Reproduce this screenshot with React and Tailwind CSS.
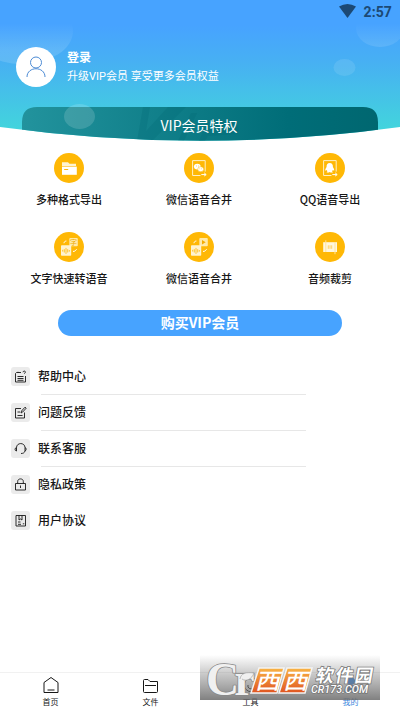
import React from "react";

const features = [
  ["多种格式导出", "folder"],
  ["微信语音合并", "wechat"],
  ["QQ语音导出", "qq"],
  ["文字快速转语音", "text"],
  ["微信语音合并", "play"],
  ["音频裁剪", "cut"],
];

function FeatureIcon({ kind }) {
  return (
    <svg className="block h-[30px] w-[30px]" viewBox="0 0 30 30" fill="none">
      <circle cx="15" cy="15" r="15" fill="#ffb805" />
      {kind === "folder" && (
        <>
          <path d="M8 13V9.2h6l1.5 1.5H22V13z" fill="#fff3d0" />
          <path d="M8 13.6h14.8v8.2H8z" fill="#fff" />
          <path d="M10.2 16.5h4" stroke="#ffb805" />
        </>
      )}
      {(kind === "wechat" || kind === "qq") && (
        <>
          <path d="M16.500 22.500H8.600V7.600h12.600v11" stroke="#fff0c4" strokeWidth="1" />
          <path d="M17.300 21.600h4.500m-1.600-1.700 2 1.700-2 1.400" stroke="#fff" strokeWidth="1" />
        </>
      )}
      {kind === "wechat" && (
        <>
          <ellipse cx="13.3" cy="13.6" rx="3.4" ry="2.9" fill="#fff" />
          <ellipse cx="16.7" cy="16.2" rx="3" ry="2.5" fill="#fff" stroke="#ffb805" strokeWidth=".5" />
          <path d="M12 13h.7m1.6 0h.7m.6 2.8h.5m1.4 0h.5" stroke="#ffb805" strokeWidth=".8" />
        </>
      )}
      {kind === "qq" && (
        <path d="M14.7 10c-2.4 0-3.3 1.800-3.100 4-.8 1.300-1.700 2.800-1.200 3.700l1.300-.7.7 1.400-.9 1.200h2.400l.8-.5.9.5H18l-.9-1.200.7-1.400 1.300.7c.5-.9-.4-2.400-1.200-3.700.2-2.200-.8-4-3.200-4z" fill="#fff" />
      )}
      {(kind === "text" || kind === "play") && (
        <>
          <rect x="15.3" y="6" width="8.5" height="8.3" rx="1" fill="#ffe9a8" />
          <rect x="7" y="13.3" width="10.2" height="10.5" rx=".8" fill="#fff3d0" />
          <path d="M8.7 17.8v1.8m1.6-2.4v3.3m1.7-4.6v6m1.7-4.7v3.3m1.6-2.5v1.7" stroke="#ffb805" strokeWidth=".8" />
          <path d="M10 11.2c.2-1.5 1-2.1 2.4-2.2M19 19.4c1.7.1 2.6-.6 3.600-2.200" stroke="#fff" />
        </>
      )}
      {kind === "text" && (
        <text x="16.1" y="13" fontSize="7" fill="#f0ab00">字</text>
      )}
      {kind === "play" && <path d="M18 8v4.500l3.700-2.200z" fill="#f5ac00" />}
      {kind === "cut" && (
        <>
          <rect x="8.2" y="10.2" width="13.8" height="9.8" fill="#fff7df" />
          <path d="M10.800 8.300v11.700M20 10v12.200" stroke="#ffe49c" />
          <path d="M13.300 13.300v3.500m1.700-3.500v3.500m1.700-3.500v3.500" stroke="#ffc94a" strokeWidth=".8" />
        </>
      )}
    </svg>
  );
}

const rows = [
  ["帮助中心", "M10 5.5H5.5l-1 1v8.5h10V9M7 5.5V4.8M6.5 9.5h6M6.5 11.5h6M6.5 13.3h6M12 5.2c0-1.5 2.6-1.5 2.4 0 0 .8-1 .8-1 1.5"],
  ["问题反馈", "M10 5.5H4.5V15h9V9.5M6.5 9H9M6.5 12.5h5M10 10l.5-2L14 4.2l1.2 1L11.7 9z"],
  ["联系客服", "M5.5 12V8.7C5.5 3.2 14 3.2 14 8.7V12M5.5 8.5C3.6 8.7 3.6 12 5.5 12M14 8.5c1.5.2 1.5 3 0 3.5-.4 1.8-2 2.5-4 2.5"],
  ["隐私政策", "M4.5 8.5h10V15h-10zM6.7 8.5V6.3c0-3.2 5.6-3.2 5.6 0v2.2M9.5 10.5v2.5"],
  ["用户协议", "M5 4.5h9.5V15H5zM8 4.5V9l1.5-1L11 9V4.5M7 11h2.5M7 13.3h3M11.8 12.8h1.5"],
];

function Nav({ label, active, children }) {
  return (
    <div className={"flex flex-1 flex-col items-center pt-[3px] pl-[1px] " + (active ? "text-[#3b87dd]" : "text-[#171717]")}>
      <svg className="h-[18px] w-[18px]" viewBox="0 0 18 18" fill="none" stroke="currentColor" strokeWidth="1">
        {children}
      </svg>
      <span className="mt-[2px] text-[8px] leading-[12px]">{label}</span>
    </div>
  );
}

function Watermark() {
  return (
    <svg className="absolute top-[655px] left-[200px] h-[45px] w-[180px] overflow-visible" viewBox="0 0 180 45">
      <defs>
        <linearGradient id="shade" x2="0" y2="1">
          <stop stopColor="#777" stopOpacity="0" />
          <stop offset=".45" stopColor="#777" stopOpacity=".42" />
          <stop offset="1" stopColor="#6c6c6c" stopOpacity=".86" />
        </linearGradient>
        <linearGradient id="orange" x2="0" y2="1">
          <stop stopColor="#f9b545" />
          <stop offset="1" stopColor="#df5421" />
        </linearGradient>
      </defs>
      <path fill="url(#shade)" d="M0 0h180v45H0z" />
      <text x="6" y="40" dx="0 -5" className="font-['Liberation_Serif',serif] font-bold" fontSize="46" fill="#f0f0f0" stroke="#888" strokeWidth="1.6" strokeLinejoin="round" paintOrder="stroke">Cr</text>
      <path d="M40 24c1-6 6-7 14-6-2 6-8 9-12 6" fill="#f0f0f0" stroke="#999" strokeWidth=".6" />
      <path d="M59 13h25l-7 25H51zM87 13h25l-7 25H79z" fill="url(#orange)" stroke="#f4f4f4" strokeWidth="1.5" />
      <g className="font-['Noto_Sans_CJK_SC',sans-serif]" fill="#fff">
        <text transform="translate(55 33.5) skewX(-14) scale(1.12 1)" fontSize="22" fontWeight="500">西</text>
        <text transform="translate(83 33.5) skewX(-14) scale(1.12 1)" fontSize="22" fontWeight="500">西</text>
        <text transform="translate(115 27) skewX(-10)" fontSize="18" fontWeight="700" stroke="#777" strokeWidth="1.5" paintOrder="stroke" textLength="57">软件园</text>
      </g>
      <text x="111" y="38" className="font-['Roboto',sans-serif] font-medium italic" fontSize="10" fill="#fff" stroke="#777" strokeWidth="1.500" paintOrder="stroke" textLength="57" lengthAdjust="spacingAndGlyphs">CR173.COM</text>
    </svg>
  );
}

export default function App() {
  return (
    <div className="relative flex h-[710px] w-[400px] flex-col overflow-hidden bg-white font-['Noto_Sans_CJK_SC',sans-serif] text-[#171717]">
      <header className="relative h-[142px] shrink-0">
        <svg className="absolute inset-0" width="400" height="142" viewBox="0 0 400 142">
          <defs>
            <linearGradient id="sky" x2="0" y2="1">
              <stop offset=".18" stopColor="#47a3ff" />
              <stop offset=".45" stopColor="#47b1f2" />
              <stop offset=".92" stopColor="#42d5dc" />
            </linearGradient>
            <linearGradient id="banner">
              <stop stopColor="#22939d" />
              <stop offset=".75" stopColor="#006d78" />
              <stop offset="1" stopColor="#006770" />
            </linearGradient>
            <linearGradient id="bubble" gradientUnits="userSpaceOnUse" x1="0" x2="0" y1="23" y2="50">
              <stop stopColor="#fff" stopOpacity="0" />
              <stop offset="1" stopColor="#fff" stopOpacity=".13" />
            </linearGradient>
            <clipPath id="curve">
              <path d="M0 0h400v127Q200 154.500 0 127z" />
            </clipPath>
          </defs>
          <g clipPath="url(#curve)">
            <path fill="url(#sky)" d="M0 0h400v142H0z" />
            <ellipse cx="22" cy="31" rx="51" ry="33" fill="url(#bubble)" />
            <ellipse cx="380" cy="28" rx="24" ry="19" fill="url(#bubble)" />
            <ellipse cx="344.500" cy="67.500" rx="11" ry="8.500" fill="#fff" fillOpacity=".1" />
            <path d="M22 142v-20q0-15 15-15h326q15 0 15 15v20z" fill="url(#banner)" />
            <path d="M143 107h7l-4 24 22-24h18l-34 34h-15zM178 141l13-28h6l-13 28zM199 141l8-19h22q13 1 8 12l-29 2-3 5z" fill="#006873" fillOpacity=".25" />
            <ellipse cx="79.500" cy="116.500" rx="15.500" ry="12.500" fill="#fff" fillOpacity=".15" />
          </g>
          <path d="M339 6.500q8.500-5 17 0l-8.500 11.500z" fill="#1c4974" />
        </svg>
        <div className="relative flex h-[25px] items-center justify-end pr-2 font-['Roboto',sans-serif] text-[14px] font-bold tracking-[0.1px] text-[#1c4974]">2:57</div>
        <div className="relative mt-[22px] flex items-center pl-4">
          <div className="flex h-10 w-10 items-center justify-center rounded-full bg-white">
            <svg width="20" height="22" viewBox="0 0 20 22" fill="none" stroke="#4c8bd5">
              <circle cx="10" cy="6.500" r="5.500" />
              <path d="M1 21c0-11 18-11 18 0" />
            </svg>
          </div>
          <div className="ml-[11px] pt-px text-white">
            <div className="text-[12px] leading-[18px] font-bold">登录</div>
            <div className="pt-px font-['Roboto','Noto_Sans_CJK_SC',sans-serif] text-[11px] leading-[20px]">升级VIP会员 享受更多会员权益</div>
          </div>
        </div>
        <div className="relative mt-[28px] pr-[2px] text-center text-[14px] leading-[20px] text-white">VIP会员特权</div>
      </header>

      <section className="mt-[11px] grid grid-cols-[130px_130px_132px] gap-y-[21px] pl-1">
        {features.map(([label, kind]) => (
          <div key={kind} className="flex h-[58px] flex-col items-center">
            <FeatureIcon kind={kind} />
            <span className="mt-[7px] text-[11px] leading-[18px] font-medium whitespace-nowrap text-[#171717]">{label}</span>
          </div>
        ))}
      </section>

      <button className="mt-[20px] ml-[58px] h-[26px] w-[284px] shrink-0 rounded-full bg-[#47a3ff] pb-[2px] text-[14px] leading-[24px] font-bold text-white">购买VIP会员</button>

      <section className="mt-[22px] pl-[11px]">
        {rows.map(([label, path], i) => (
          <div key={label} className="relative flex h-9 items-center">
            <svg className="h-[19px] w-[19px] rounded-[3px] bg-[#ebebeb]" viewBox="0 0 19 19" fill="none" stroke="#171717" strokeWidth=".9">
              <path d={path} />
            </svg>
            <span className="ml-2 text-[12px] leading-[18px] font-medium text-[#171717]">{label}</span>
            {i < 3 && <div className="absolute right-[94px] bottom-[-1px] left-[30px] h-px bg-[#e7e7e7]" />}
          </div>
        ))}
      </section>

      <nav className="mt-auto flex h-[38px] shrink-0 border-t border-[#f1f1f1]">
        <Nav label="首页"><path d="M2 6.500 9 1.500 16 6.500V16.500H2zM5.500 14h7" /></Nav>
        <Nav label="文件"><path d="M1.500 4.500q0-1 1-1H6l2 2h7.500v10q0 1-1 1h-12q-1 0-1-1zM3 9.500h11" /></Nav>
        <Nav label="工具"><path d="M12 2a4 4 0 0 0 4 5 7 7 0 1 1-5-5M6 9a3 3 0 0 0 5 3" /></Nav>
        <Nav label="我的" active><circle cx="9" cy="5" r="3.500" fill="currentColor" /><path d="M3 16c0-9 12-9 12 0z" fill="currentColor" /></Nav>
      </nav>
      <Watermark />
    </div>
  );
}
